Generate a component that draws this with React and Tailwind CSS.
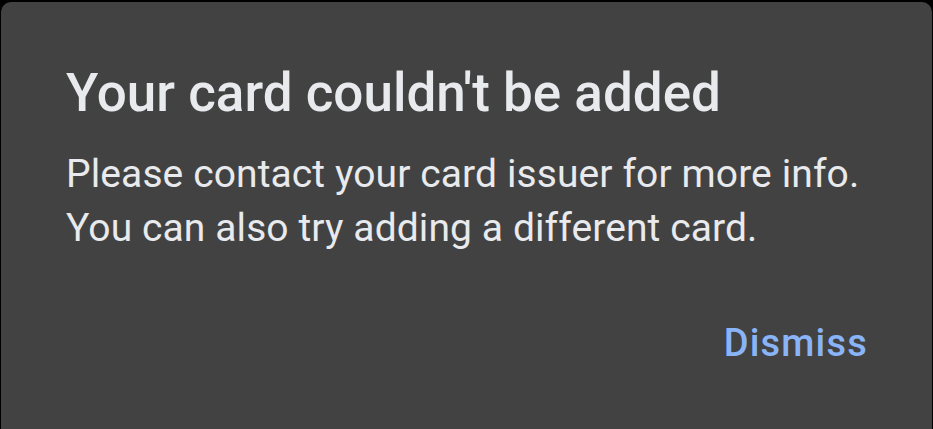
export default function App() {
  return (
    <div className="w-[933px] h-[429px] bg-black pt-[2px] px-[1px]">
      <div className="h-[427px] bg-[#424242] rounded-t-[10px] pl-[65px] pr-[65px] pt-[59px] flex flex-col" style={{ fontFamily: 'Roboto, sans-serif' }}>
        <h1 className="text-[#e8eaed] text-[53px] leading-[64px] font-medium">
          Your card couldn't be added
        </h1>
        <p className="mt-[22px] text-[#e8eaed] text-[39px] leading-[54px] tracking-[0.1px]">
          Please contact your card issuer for more info.
          <br />
          You can also try adding a different card.
        </p>
        <div className="mt-[64px] flex justify-end">
          <span className="text-[#8ab4f8] text-[38px] font-medium leading-[48px] tracking-[1.2px] -mr-[1px]">Dismiss</span>
        </div>
      </div>
    </div>
  );
}
